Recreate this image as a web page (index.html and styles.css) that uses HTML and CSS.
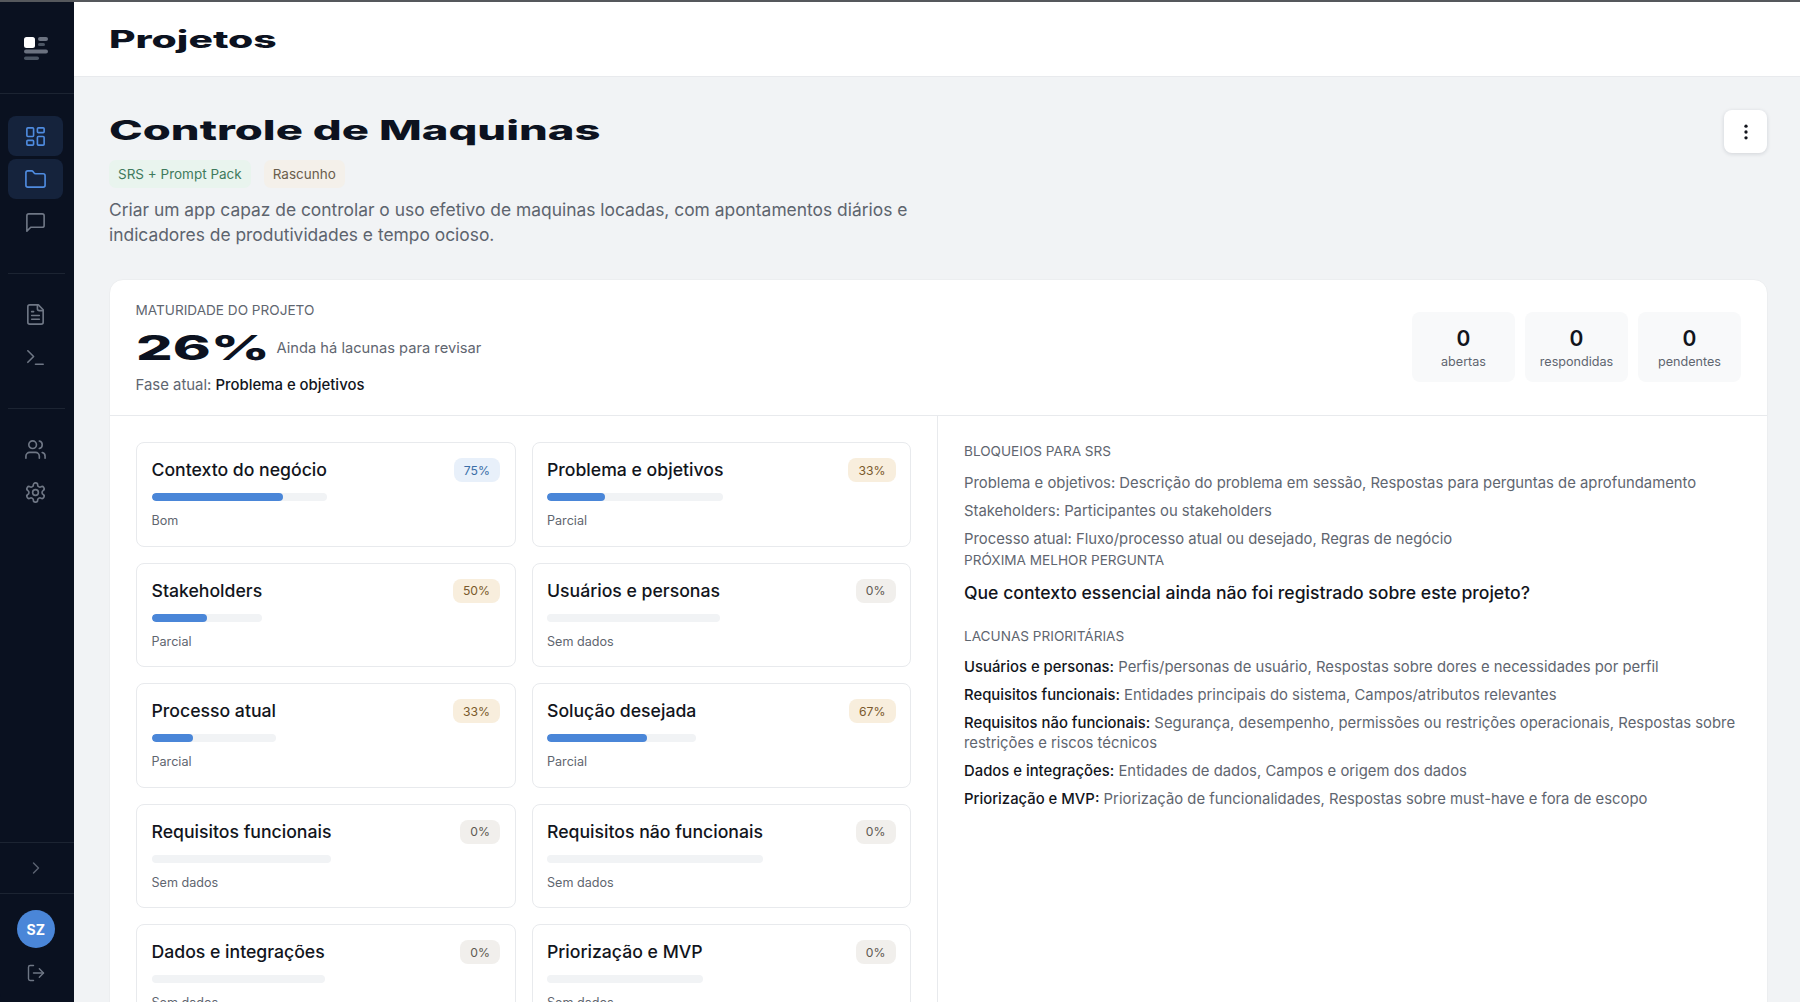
FILE: index.html
```html
<!DOCTYPE html>
<html lang="pt-BR">
<head>
<meta charset="utf-8">
<title>Projetos</title>
<link rel="stylesheet" href="styles.css">
</head>
<body>
<div class="app">
  <aside class="sidebar">
    <div class="logo-wrap">
      <svg class="logo" width="26" height="24" viewBox="0 0 26 24"><rect x="0" y="0" width="11" height="11" rx="2.5" fill="#fff"/><rect x="14" y="0" width="10" height="4" rx="2" fill="#6b7280"/><rect x="14" y="6" width="7" height="3" rx="1.5" fill="#4b5563"/><rect x="0" y="12.500" width="24" height="4" rx="2" fill="#6b7280"/><rect x="0" y="19.500" width="15" height="3.500" rx="1.700" fill="#4b5563"/></svg>
    </div>
    <nav class="nav-group first">
      <a class="nav-item active"><svg class="icon" viewBox="0 0 24 24"><rect x="3" y="3" width="7" height="9" rx="1"/><rect x="14" y="3" width="7" height="5" rx="1"/><rect x="14" y="12" width="7" height="9" rx="1"/><rect x="3" y="16" width="7" height="5" rx="1"/></svg></a>
      <a class="nav-item active"><svg class="icon" viewBox="0 0 24 24"><path d="M20 20a2 2 0 0 0 2-2V8a2 2 0 0 0-2-2h-7.900a2 2 0 0 1-1.690-.9L9.600 3.900A2 2 0 0 0 7.930 3H4a2 2 0 0 0-2 2v13a2 2 0 0 0 2 2Z"/></svg></a>
      <a class="nav-item"><svg class="icon" viewBox="0 0 24 24"><path d="M21 15a2 2 0 0 1-2 2H7l-4 4V5a2 2 0 0 1 2-2h14a2 2 0 0 1 2 2z"/></svg></a>
    </nav>
    <nav class="nav-group">
      <a class="nav-item"><svg class="icon" viewBox="0 0 24 24"><path d="M15 2H6a2 2 0 0 0-2 2v16a2 2 0 0 0 2 2h12a2 2 0 0 0 2-2V7Z"/><path d="M14 2v4a2 2 0 0 0 2 2h4"/><path d="M10 9H8"/><path d="M16 13H8"/><path d="M16 17H8"/></svg></a>
      <a class="nav-item"><svg class="icon" viewBox="0 0 24 24"><polyline points="4 17 10 11 4 5"/><line x1="12" x2="20" y1="19" y2="19"/></svg></a>
    </nav>
    <nav class="nav-group last">
      <a class="nav-item"><svg class="icon" viewBox="0 0 24 24"><path d="M16 21v-2a4 4 0 0 0-4-4H6a4 4 0 0 0-4 4v2"/><circle cx="9" cy="7" r="4"/><path d="M22 21v-2a4 4 0 0 0-3-3.870"/><path d="M16 3.130a4 4 0 0 1 0 7.750"/></svg></a>
      <a class="nav-item"><svg class="icon" viewBox="0 0 24 24"><path d="M12.220 2h-.44a2 2 0 0 0-2 2v.18a2 2 0 0 1-1 1.730l-.43.25a2 2 0 0 1-2 0l-.15-.08a2 2 0 0 0-2.730.73l-.22.38a2 2 0 0 0 .73 2.730l.15.1a2 2 0 0 1 1 1.720v.51a2 2 0 0 1-1 1.740l-.15.09a2 2 0 0 0-.73 2.730l.22.38a2 2 0 0 0 2.730.73l.15-.08a2 2 0 0 1 2 0l.43.25a2 2 0 0 1 1 1.730V20a2 2 0 0 0 2 2h.44a2 2 0 0 0 2-2v-.18a2 2 0 0 1 1-1.730l.43-.25a2 2 0 0 1 2 0l.15.08a2 2 0 0 0 2.730-.73l.22-.39a2 2 0 0 0-.73-2.730l-.15-.08a2 2 0 0 1-1-1.740v-.5a2 2 0 0 1 1-1.740l.15-.09a2 2 0 0 0 .73-2.730l-.22-.38a2 2 0 0 0-2.730-.73l-.15.08a2 2 0 0 1-2 0l-.43-.25a2 2 0 0 1-1-1.730V4a2 2 0 0 0-2-2z"/><circle cx="12" cy="12" r="3"/></svg></a>
    </nav>
    <div class="side-toggle"><svg class="icon chev" viewBox="0 0 24 24"><path d="m9 18 6-6-6-6"/></svg></div>
    <div class="side-user">
      <div class="avatar">SZ</div>
      <svg class="icon logout" viewBox="0 0 24 24"><path d="M9 21H5a2 2 0 0 1-2-2V5a2 2 0 0 1 2-2h4"/><polyline points="16 17 21 12 16 7"/><line x1="21" x2="9" y1="12" y2="12"/></svg>
    </div>
  </aside>

  <div class="main">
    <header class="topbar"><h1 class="page-title wide">Projetos</h1></header>
    <main class="content">
      <div class="project-head">
        <div class="project-info">
          <h2 class="project-title wide">Controle de Maquinas</h2>
          <div class="tags">
            <span class="tag tag-green">SRS + Prompt Pack</span>
            <span class="tag tag-sand">Rascunho</span>
          </div>
          <p class="desc">Criar um app capaz de controlar o uso efetivo de maquinas locadas, com apontamentos diários e indicadores de produtividades e tempo ocioso.</p>
        </div>
        <button class="menu-btn" type="button" aria-label="Mais opções"><svg class="dots" viewBox="0 0 24 24"><circle cx="12" cy="5" r="2"/><circle cx="12" cy="12" r="2"/><circle cx="12" cy="19" r="2"/></svg></button>
      </div>

      <section class="panel">
        <div class="panel-top">
          <div>
            <div class="label">MATURIDADE DO PROJETO</div>
            <div class="score-row"><span class="score wide">26%</span><span class="score-note">Ainda há lacunas para revisar</span></div>
            <div class="phase">Fase atual: <strong>Problema e objetivos</strong></div>
          </div>
          <div class="stats">
            <div class="stat"><b>0</b><span>abertas</span></div>
            <div class="stat"><b>0</b><span>respondidas</span></div>
            <div class="stat"><b>0</b><span>pendentes</span></div>
          </div>
        </div>
        <div class="panel-body">
          <div class="areas">
            <article class="area"><div class="area-main"><h3>Contexto do negócio</h3><div class="bar"><i style="width:75%"></i></div><small>Bom</small></div><span class="pct pct-blue">75%</span></article>
            <article class="area"><div class="area-main"><h3>Problema e objetivos</h3><div class="bar"><i style="width:33%"></i></div><small>Parcial</small></div><span class="pct pct-amber">33%</span></article>
            <article class="area"><div class="area-main"><h3>Stakeholders</h3><div class="bar"><i style="width:50%"></i></div><small>Parcial</small></div><span class="pct pct-amber">50%</span></article>
            <article class="area"><div class="area-main"><h3>Usuários e personas</h3><div class="bar"></div><small>Sem dados</small></div><span class="pct pct-gray">0%</span></article>
            <article class="area"><div class="area-main"><h3>Processo atual</h3><div class="bar"><i style="width:33%"></i></div><small>Parcial</small></div><span class="pct pct-amber">33%</span></article>
            <article class="area"><div class="area-main"><h3>Solução desejada</h3><div class="bar"><i style="width:67%"></i></div><small>Parcial</small></div><span class="pct pct-amber">67%</span></article>
            <article class="area"><div class="area-main"><h3>Requisitos funcionais</h3><div class="bar"></div><small>Sem dados</small></div><span class="pct pct-gray">0%</span></article>
            <article class="area"><div class="area-main"><h3>Requisitos não funcionais</h3><div class="bar"></div><small>Sem dados</small></div><span class="pct pct-gray">0%</span></article>
            <article class="area"><div class="area-main"><h3>Dados e integrações</h3><div class="bar"></div><small>Sem dados</small></div><span class="pct pct-gray">0%</span></article>
            <article class="area"><div class="area-main"><h3>Priorização e MVP</h3><div class="bar"></div><small>Sem dados</small></div><span class="pct pct-gray">0%</span></article>
          </div>
          <div class="insights">
            <div class="label">BLOQUEIOS PARA SRS</div>
            <ul class="list blockers">
              <li>Problema e objetivos: Descrição do problema em sessão, Respostas para perguntas de aprofundamento</li>
              <li>Stakeholders: Participantes ou stakeholders</li>
              <li>Processo atual: Fluxo/processo atual ou desejado, Regras de negócio</li>
            </ul>
            <div class="label">PRÓXIMA MELHOR PERGUNTA</div>
            <p class="question">Que contexto essencial ainda não foi registrado sobre este projeto?</p>
            <div class="label">LACUNAS PRIORITÁRIAS</div>
            <ul class="list gaps">
              <li><strong>Usuários e personas:</strong> Perfis/personas de usuário, Respostas sobre dores e necessidades por perfil</li>
              <li><strong>Requisitos funcionais:</strong> Entidades principais do sistema, Campos/atributos relevantes</li>
              <li><strong>Requisitos não funcionais:</strong> Segurança, desempenho, permissões ou restrições operacionais, Respostas sobre restrições e riscos técnicos</li>
              <li><strong>Dados e integrações:</strong> Entidades de dados, Campos e origem dos dados</li>
              <li><strong>Priorização e MVP:</strong> Priorização de funcionalidades, Respostas sobre must-have e fora de escopo</li>
            </ul>
          </div>
        </div>
      </section>
    </main>
  </div>
</div>
</body>
</html>
```
FILE: styles.css
```css
* { box-sizing: border-box; }
html, body { margin: 0; height: 100%; overflow: hidden; }
body { background: #0a1120; font-family: "Inter", "Liberation Sans", sans-serif; color: #12151c; }
.app { display: flex; height: 1002px; border-top: 2px solid #55585c; }
.wide { font-family: "Inter", sans-serif; font-weight: 800; transform-origin: left center; color: #0c1220; margin: 0; }

/* sidebar */
.sidebar { width: 73.500px; flex: none; background: #0a1120; display: flex; flex-direction: column; border-bottom-left-radius: 8px; }
.logo-wrap { height: 92px; display: flex; align-items: center; justify-content: center; border-bottom: 1px solid #1c2432; padding: 2px 0 0 1px; }
.nav-group { padding: 21px 10.500px 31px 8px; margin: 0; display: flex; flex-direction: column; gap: 3px; position: relative; }
.nav-group.first { padding-top: 22px; }
.nav-group + .nav-group::before { content: ""; position: absolute; top: 0; left: 8px; right: 9px; height: 1px; background: #1c2432; }
.nav-group.last { flex: 1; }
.nav-item { height: 40px; border-radius: 8px; display: flex; align-items: center; justify-content: center; color: #6f7785; }
.nav-item.active { background: #15233c; color: #4f8ce0; }
.icon { width: 23px; height: 23px; fill: none; stroke: currentColor; stroke-width: 1.700; stroke-linecap: round; stroke-linejoin: round; }
.side-toggle { height: 52px; display: flex; align-items: center; justify-content: center; border-top: 1px solid #1c2432; border-bottom: 1px solid #1c2432; color: #5a6270; padding-right: 2px; }
.side-toggle .chev { width: 20px; height: 20px; }
.side-user { height: 108px; display: flex; flex-direction: column; align-items: center; padding: 16px 2px 0 0; gap: 15px; color: #6f7785; }
.avatar { width: 38px; height: 38px; border-radius: 50%; background: #4a86d8; color: #fff; font-size: 14px; font-weight: 700; display: flex; align-items: center; justify-content: center; }
.logout { width: 20px; height: 20px; }

/* main */
.main { flex: 1; min-width: 0; background: #f1f3f5; display: flex; flex-direction: column; }
.topbar { height: 75px; flex: none; background: #fff; border-bottom: 1px solid #e8eaed; display: flex; align-items: center; padding: 2px 0 0 35.500px; }
.page-title { font-size: 24px; line-height: 30px; transform: scaleX(1.7); }
.content { flex: 1; min-height: 0; padding: 33px 32px 0 35.500px; overflow: hidden; }
.project-head { display: flex; justify-content: space-between; align-items: flex-start; height: 169px; }
.project-title { font-size: 27px; line-height: 40px; margin-top: 1px; transform: scaleX(1.68); }
.tags { display: flex; gap: 13px; margin-top: 9px; }
.tag { height: 28px; padding: 0 9px; border-radius: 7px; font-size: 13.500px; display: flex; align-items: center; }
.tag-green { background: #e9f4ee; color: #3f7a5d; }
.tag-sand { background: #f4f0ea; color: #6a5d4c; }
.desc { margin: 9px 0 0; width: 840px; font-size: 17.400px; line-height: 25px; color: #5d646e; }
.menu-btn { width: 43px; height: 43px; margin-right: 1px; border: 0; border-radius: 8px; background: #fff; box-shadow: 0 1px 4px rgba(16, 24, 40, .14); display: flex; align-items: center; justify-content: center; padding: 0; }
.dots { width: 20px; height: 20px; fill: #12151c; }

/* panel */
.panel { background: #fff; border: 1px solid #eceef0; border-radius: 14px; }
.panel-top { height: 136px; padding: 20px 26px 0 25.500px; display: flex; justify-content: space-between; border-bottom: 1px solid #e8eaed; }
.label { font-size: 13.600px; line-height: 20px; color: #5f6670; }
.score-row { display: flex; align-items: center; height: 36px; margin-top: 10px; }
.score { font-size: 34px; line-height: 36px; transform: scaleX(1.69); width: 130px; margin-right: 11px; white-space: nowrap; }
.score-note { font-size: 14.700px; color: #5f6670; }
.phase { font-size: 14.900px; line-height: 22px; margin-top: 8px; color: #5f6670; }
.phase strong { font-weight: 500; color: #12151c; }
.stats { display: flex; gap: 10px; padding-top: 12px; }
.stat { width: 103px; height: 70px; padding-top: 4px; background: #f8f9fa; border-radius: 8px; display: flex; flex-direction: column; align-items: center; justify-content: center; }
.stat b { font-size: 21px; line-height: 26px; font-weight: 600; color: #12151c; }
.stat span { font-size: 12.600px; line-height: 20px; color: #5f6670; }

.panel-body { display: grid; grid-template-columns: 828px 1fr; }
.areas { padding: 26px 26px 0; border-right: 1px solid #e8eaed; display: grid; grid-template-columns: 1fr 1fr; gap: 16px; height: 620px; align-content: start; }
.area { height: 104.500px; background: #fff; border: 1px solid #e8eaed; border-radius: 8px; padding: 15px 14.500px 0 14.500px; display: flex; justify-content: space-between; align-items: flex-start; }
.area-main { display: flex; flex-direction: column; }
.area h3 { margin: 0; font-size: 17.650px; line-height: 24px; font-weight: 500; color: #12151c; }
.bar { height: 8px; border-radius: 4px; background: #f1f3f5; margin-top: 11px; overflow: hidden; }
.bar i { display: block; height: 100%; border-radius: 4px; background: #4a86d8; }
.area small { font-size: 12.600px; line-height: 18px; margin-top: 11px; color: #5f6670; }
.pct { height: 24px; padding: 0 10px; border-radius: 8px; font-size: 12.200px; display: flex; align-items: center; }
.pct-blue { background: #e8f0fa; color: #3b6ea8; }
.pct-amber { background: #f8eedd; color: #7a5a2c; }
.pct-gray { background: #f1efec; color: #5f5a52; }

.insights { padding: 25px 26px 0; }
.list { list-style: none; margin: 11px 0 0; padding: 0; font-size: 14.850px; line-height: 20px; color: #5f6670; }
.list li { margin-top: 8px; }
.list strong { font-weight: 500; color: #12151c; }
.blockers { margin: 0 0 1px; padding-top: 3.500px; }
.question { margin: 9px 0 19px; font-size: 17.600px; line-height: 28px; font-weight: 500; color: #12151c; }
```
